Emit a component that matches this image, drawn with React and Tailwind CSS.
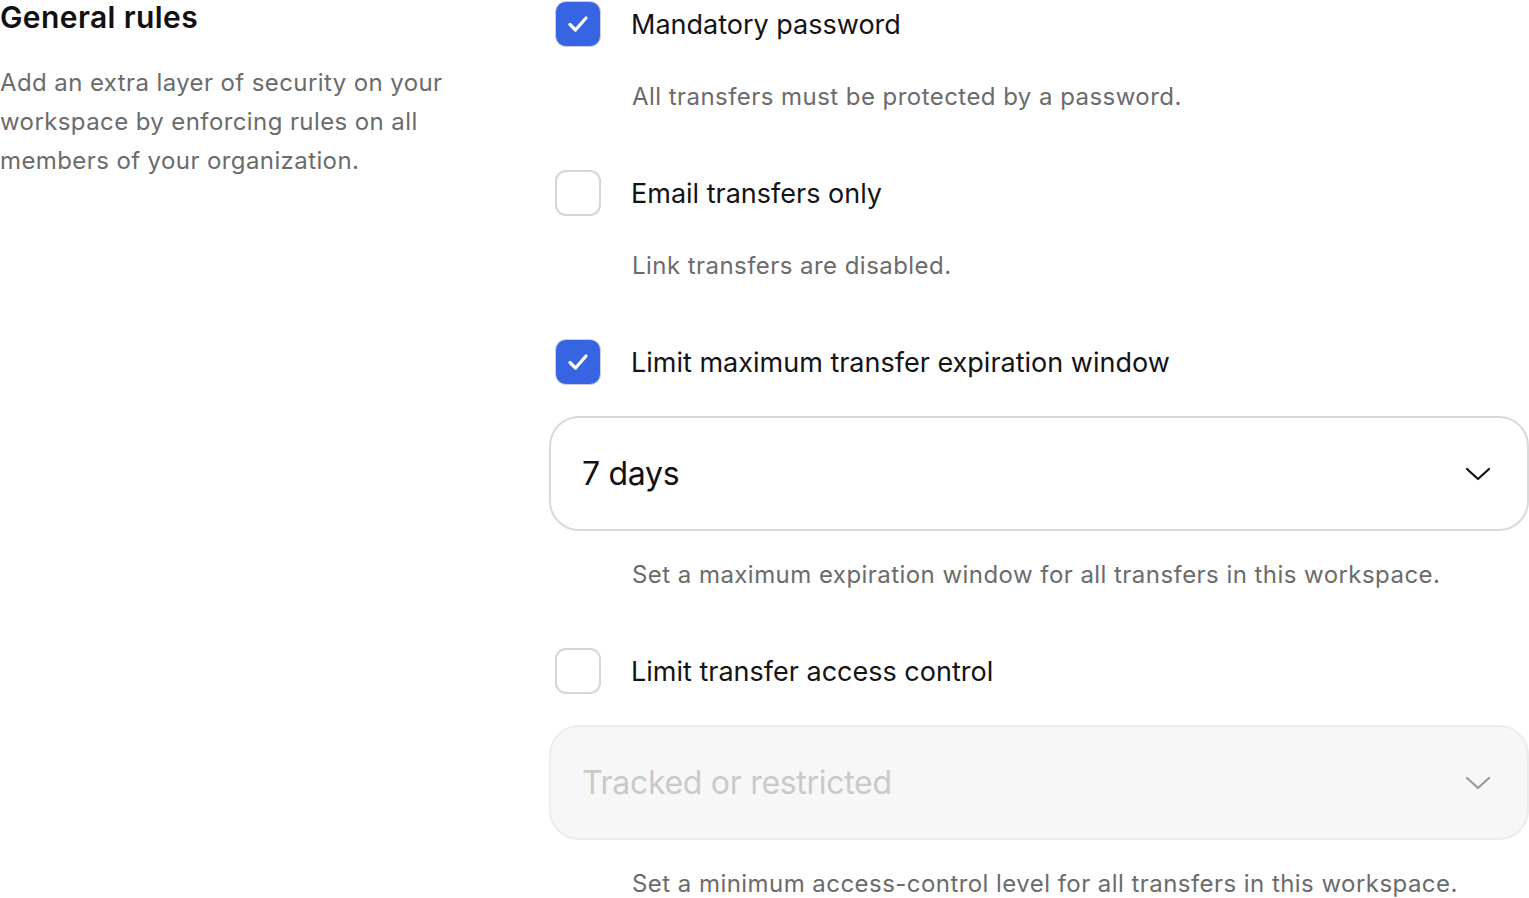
import { useState } from "react";

const FONT = { fontFamily: "Inter, 'Noto Sans', sans-serif" };

function Checkbox({ checked, onChange }) {
    return (
        <button
            type="button"
            onClick={onChange}
            className={
                checked
                    ? "ml-[6px] flex h-[46px] w-[46px] shrink-0 items-center justify-center rounded-[11px] border border-[#c9cfdd] bg-[#3764e3]"
                    : "ml-[6px] flex h-[46px] w-[46px] shrink-0 items-center justify-center rounded-[11px] border-2 border-[#d6d6d6] bg-white"
            }
        >
            {checked && (
                <svg width="22" height="18" viewBox="0 0 22 18" fill="none">
                    <path d="M3 9.5 L8.5 15 L19 3" stroke="white" strokeWidth="3.2" strokeLinecap="round" strokeLinejoin="round" />
                </svg>
            )}
        </button>
    );
}

function Chevron({ color }) {
    return (
        <svg width="26" height="16" viewBox="0 0 26 16" fill="none">
            <path d="M2 3 L13 13 L24 3" stroke={color} strokeWidth="2.2" strokeLinecap="round" strokeLinejoin="round" />
        </svg>
    );
}

function Select({ value, disabled }) {
    return (
        <div
            className={
                disabled
                    ? "flex h-[115px] items-center justify-between rounded-[30px] border-2 border-[#ececec] bg-[#f7f7f7] pl-[31px] pr-[36px]"
                    : "flex h-[115px] items-center justify-between rounded-[30px] border-2 border-[#d9d9d9] bg-white pl-[31px] pr-[36px]"
            }
        >
            <span className={disabled ? "text-[32px] tracking-[-0.3px] text-[#cacaca]" : "text-[32px] tracking-[-0.3px] text-[#111111]"}>{value}</span>
            <Chevron color={disabled ? "#9a9a9a" : "#111111"} />
        </div>
    );
}

function Rule({ label, description, checked, onToggle, select, selectDisabled }) {
    return (
        <div className="flex flex-col">
            <div className="flex h-[46px] items-center gap-[30px]">
                <Checkbox checked={checked} onChange={onToggle} />
                <span className="text-[27px] leading-none text-[#141414]">{label}</span>
            </div>
            {select && (
                <div className="mt-[31px]">
                    <Select value={select} disabled={selectDisabled} />
                </div>
            )}
            <p
                className={
                    select
                        ? "mt-[26px] pl-[83px] text-[24px] leading-[36px] tracking-[0.45px] text-[#6b6b6b]"
                        : "mt-[32px] pl-[83px] text-[24px] leading-[36px] tracking-[0.45px] text-[#6b6b6b]"
                }
            >
                {description}
            </p>
        </div>
    );
}

export default function App() {
    const [rules, setRules] = useState({
        password: true,
        email: false,
        expiration: true,
        access: false,
    });

    const toggle = (key) => setRules((r) => ({ ...r, [key]: !r[key] }));

    return (
        <div className="flex bg-white" style={FONT}>
            <div className="w-[549px] shrink-0">
                <h2 className="text-[30px] font-semibold leading-[34px] tracking-[0.4px] text-[#111111]">General rules</h2>
                <p className="mt-[29px] w-[470px] text-[24px] leading-[39px] tracking-[0.4px] text-[#6b6b6b]">
                    Add an extra layer of security on your workspace by enforcing rules on all members of your organization.
                </p>
            </div>
            <div className="flex flex-1 flex-col gap-[55px] pt-[1px]">
                <Rule
                    label="Mandatory password"
                    description="All transfers must be protected by a password."
                    checked={rules.password}
                    onToggle={() => toggle("password")}
                />
                <Rule
                    label="Email transfers only"
                    description="Link transfers are disabled."
                    checked={rules.email}
                    onToggle={() => toggle("email")}
                />
                <Rule
                    label="Limit maximum transfer expiration window"
                    description="Set a maximum expiration window for all transfers in this workspace."
                    checked={rules.expiration}
                    onToggle={() => toggle("expiration")}
                    select="7 days"
                />
                <Rule
                    label="Limit transfer access control"
                    description="Set a minimum access-control level for all transfers in this workspace."
                    checked={rules.access}
                    onToggle={() => toggle("access")}
                    select="Tracked or restricted"
                    selectDisabled
                />
            </div>
        </div>
    );
}
